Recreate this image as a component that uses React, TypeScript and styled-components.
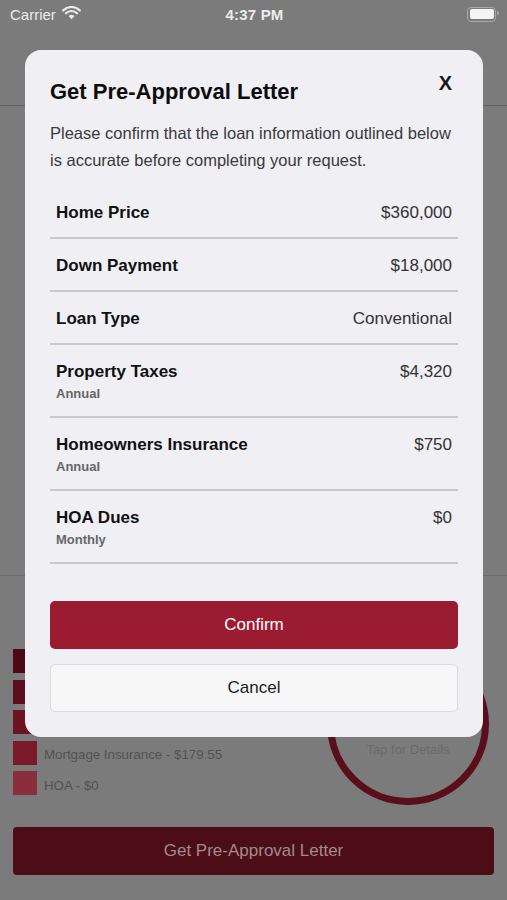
import React from "react";
import styled, { createGlobalStyle } from "styled-components";

const rows = [
  { label: "Home Price", value: "$360,000" },
  { label: "Down Payment", value: "$18,000" },
  { label: "Loan Type", value: "Conventional" },
  { label: "Property Taxes", sub: "Annual", value: "$4,320" },
  { label: "Homeowners Insurance", sub: "Annual", value: "$750" },
  { label: "HOA Dues", sub: "Monthly", value: "$0" },
];

const legend = [
  { color: "#4b0a15", text: "Principal & Interest - $1,441.17" },
  { color: "#5b0e1b", text: "Property Taxes - $360" },
  { color: "#6b1321", text: "Homeowners Insurance - $62.50" },
  { color: "#7b1a2a", text: "Mortgage Insurance - $179.55" },
  { color: "#8a2e3e", text: "HOA - $0" },
];

const App = () => {
  return (
    <>
      <GlobalStyle />
      <Screen>
        <StatusBar>
          <Carrier>
            Carrier
            <svg width="19" height="14" viewBox="0 0 19 14">
              <path
                d="M9.5 13.2 L6.6 10.1 A4.2 4.2 0 0 1 12.4 10.1 Z"
                fill="#ececec"
              />
              <path
                d="M3.9 7.3 A8 8 0 0 1 15.1 7.3"
                stroke="#ececec"
                strokeWidth="2.2"
                fill="none"
                strokeLinecap="round"
              />
              <path
                d="M1.2 4.4 A11.8 11.8 0 0 1 17.8 4.4"
                stroke="#ececec"
                strokeWidth="2.2"
                fill="none"
                strokeLinecap="round"
              />
            </svg>
          </Carrier>
          <Clock>4:37 PM</Clock>
          <Battery>
            <BatteryFill />
          </Battery>
        </StatusBar>
        <NavArea />
        <Summary />
        <ChartSection>
          <Legend>
            {legend.map((item) => (
              <LegendRow key={item.text}>
                <Swatch $color={item.color} />
                <LegendText>{item.text}</LegendText>
              </LegendRow>
            ))}
          </Legend>
          <Donut>
            <svg width="162" height="162" viewBox="0 0 162 162">
              <circle
                cx="81"
                cy="81"
                r="77.5"
                stroke="#5a0e1b"
                strokeWidth="7"
                fill="none"
              />
            </svg>
            <DonutText>
              <DonutAmount>$2,043.22</DonutAmount>
              <DonutCaption>Tap for Details</DonutCaption>
            </DonutText>
          </Donut>
        </ChartSection>
        <Footer>
          <DimButton>Get Pre-Approval Letter</DimButton>
        </Footer>

        <Modal>
          <ModalHeader>
            <Title>Get Pre-Approval Letter</Title>
            <Close>X</Close>
          </ModalHeader>
          <Intro>
            Please confirm that the loan information outlined below is accurate
            before completing your request.
          </Intro>
          <List>
            {rows.map((row) => (
              <Row key={row.label}>
                <RowLabels>
                  <Label>{row.label}</Label>
                  {row.sub && <SubLabel>{row.sub}</SubLabel>}
                </RowLabels>
                <Value>{row.value}</Value>
              </Row>
            ))}
          </List>
          <Actions>
            <PrimaryButton>Confirm</PrimaryButton>
            <SecondaryButton>Cancel</SecondaryButton>
          </Actions>
        </Modal>
      </Screen>
    </>
  );
};

export default App;

const GlobalStyle = createGlobalStyle`
  body {
    margin: 0;
    font-family: "Liberation Sans", Arial, Helvetica, sans-serif;
    background: #7b7b7b;
  }
`;

const Screen = styled.div`
  position: relative;
  width: 507px;
  height: 900px;
  overflow: hidden;
  background-color: #7b7b7b;
  display: flex;
  flex-direction: column;
`;

const StatusBar = styled.div`
  height: 28px;
  display: grid;
  grid-template-columns: 1fr auto 1fr;
  align-items: center;
  padding: 0 8px 0 10px;
  color: #ececec;
  font-size: 15px;
`;

const Carrier = styled.div`
  display: flex;
  align-items: center;
  gap: 6px;
  svg {
    margin-top: -3px;
  }
`;

const Clock = styled.div`
  font-weight: 700;
  letter-spacing: 0.2px;
`;

const Battery = styled.div`
  justify-self: end;
  position: relative;
  width: 24px;
  height: 10px;
  border: 1.5px solid #a8a8a8;
  border-radius: 4px;
  padding: 1.5px;
  margin-right: 3px;
  &::after {
    content: "";
    position: absolute;
    right: -4px;
    top: 3px;
    width: 2px;
    height: 4px;
    border-radius: 0 2px 2px 0;
    background: #a8a8a8;
  }
`;

const BatteryFill = styled.div`
  width: 100%;
  height: 100%;
  border-radius: 2px;
  background: #f4f4f4;
`;

const NavArea = styled.div`
  height: 77px;
  border-bottom: 1px solid #616161;
`;

const Summary = styled.div`
  height: 469px;
  border-bottom: 1px solid #6a6a6a;
`;

const ChartSection = styled.div`
  height: 251px;
  display: flex;
  justify-content: space-between;
  align-items: flex-start;
  padding: 67px 18px 0 13px;
  box-sizing: border-box;
`;

const Legend = styled.div`
  display: flex;
  flex-direction: column;
  gap: 6.5px;
  margin-top: 6px;
`;

const LegendRow = styled.div`
  display: flex;
  align-items: center;
  gap: 7px;
`;

const Swatch = styled.div<{ $color: string }>`
  width: 24px;
  height: 24px;
  background-color: ${(p) => p.$color};
`;

const LegendText = styled.span`
  font-size: 13.3px;
  color: #525252;
  padding-top: 4px;
`;

const Donut = styled.div`
  display: grid;
  width: 162px;
  height: 162px;
  > * {
    grid-area: 1 / 1;
  }
`;

const DonutText = styled.div`
  display: flex;
  flex-direction: column;
  align-items: center;
  padding-top: 62px;
  gap: 8px;
`;

const DonutAmount = styled.div`
  font-size: 24px;
  font-weight: 700;
  color: #5a5a5a;
  line-height: 28px;
`;

const DonutCaption = styled.div`
  font-size: 13px;
  color: #6a6a6a;
  line-height: 18px;
`;

const Footer = styled.div`
  padding: 0 13px;
`;

const DimButton = styled.div`
  height: 48px;
  border-radius: 4px;
  background-color: #4c0d17;
  color: #a38a8d;
  font-size: 17px;
  display: flex;
  align-items: center;
  justify-content: center;
`;

const Modal = styled.div`
  position: absolute;
  top: 50px;
  left: 25px;
  width: 458px;
  box-sizing: border-box;
  padding: 29px 25px 25px;
  border-radius: 16px;
  background-color: #efeff4;
  display: flex;
  flex-direction: column;
`;

const ModalHeader = styled.div`
  display: flex;
  justify-content: space-between;
  align-items: flex-start;
`;

const Title = styled.h2`
  margin: 0;
  font-size: 22px;
  line-height: 26px;
  font-weight: 700;
  color: #0c0c0c;
`;

const Close = styled.div`
  font-size: 20px;
  font-weight: 700;
  line-height: 20px;
  color: #1a1a1a;
  margin: -6px 6px 0 0;
`;

const Intro = styled.p`
  margin: 15px 0 0;
  font-size: 16.5px;
  line-height: 27px;
  color: #3a3a3a;
`;

const List = styled.div`
  margin-top: 12px;
  display: flex;
  flex-direction: column;
`;

const Row = styled.div`
  display: flex;
  justify-content: space-between;
  align-items: flex-start;
  padding: 17px 6px 14px;
  border-bottom: 2px solid #c9c9cd;
`;

const RowLabels = styled.div`
  display: flex;
  flex-direction: column;
  gap: 4px;
`;

const Label = styled.div`
  font-size: 17px;
  line-height: 20px;
  font-weight: 700;
  color: #111111;
`;

const SubLabel = styled.div`
  font-size: 13px;
  line-height: 16px;
  font-weight: 700;
  color: #666666;
`;

const Value = styled.div`
  font-size: 17px;
  line-height: 20px;
  color: #333333;
`;

const Actions = styled.div`
  margin-top: 37px;
  display: flex;
  flex-direction: column;
  gap: 15px;
`;

const PrimaryButton = styled.button`
  height: 48px;
  border: 0;
  border-radius: 5px;
  background-color: #9b1c31;
  color: #ffffff;
  font-family: inherit;
  font-size: 17px;
`;

const SecondaryButton = styled.button`
  height: 48px;
  border: 1px solid #dcdce0;
  border-radius: 5px;
  background-color: #f7f7f8;
  color: #1c1c1c;
  font-family: inherit;
  font-size: 17px;
`;
